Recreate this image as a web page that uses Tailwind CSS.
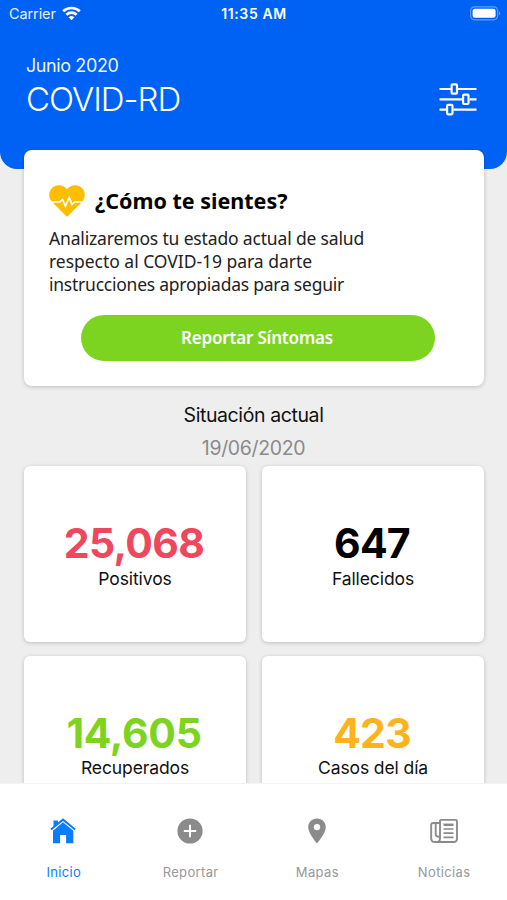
<!DOCTYPE html>
<html lang="es">
<head>
<meta charset="utf-8">
<meta name="viewport" content="width=device-width, initial-scale=1">
<title>COVID-RD</title>
<script src="https://cdn.jsdelivr.net/npm/@tailwindcss/browser@4"></script>
</head>
<body class="bg-[#eeeeee]">
<div class="flex h-[900px] w-[507px] flex-col overflow-hidden bg-[#eeeeee] font-['Inter','Liberation_Sans',sans-serif] text-[#111]">
  <main class="flex min-h-0 flex-1 flex-col overflow-hidden">
    <header class="h-[169px] shrink-0 rounded-b-[17px] bg-[#0062f4] text-white">
      <div class="grid h-7 grid-cols-3 items-center pr-[6px] pl-[9px] leading-none">
        <div class="flex items-center gap-[6px]">
          <span class="text-[14.5px] tracking-[-0.1px] text-white/90">Carrier</span>
          <svg class="-mt-[2px] h-[15px] w-[19px]" viewBox="0 0 19 15" fill="none" stroke="white" stroke-width="2.7"><path d="M1.2 5.3C5.9.9 13.1.9 17.8 5.3M4.4 8.7c2.9-2.7 7.3-2.7 10.2 0"/><path d="M6.6 11.3q2.9-2.4 5.8 0L9.5 14.2z" fill="white" stroke="none"/></svg>
        </div>
        <span class="-ml-[2px] text-center text-[14px] font-semibold tracking-[0.6px] whitespace-nowrap">11:35 AM</span>
        <svg class="-mt-[2px] h-[15px] w-[31px] justify-self-end" viewBox="0 0 31 15"><rect x=".6" y=".8" width="27" height="13" rx="4" fill="none" stroke="white" stroke-opacity=".38" stroke-width="1.2"/><rect x="2.6" y="2.8" width="23" height="9" rx="2.2" fill="white"/><path d="M29 5q2.3 2.3 0 4.6z" fill="white" fill-opacity=".4"/></svg>
      </div>
      <div class="flex items-start justify-between pt-[27px] pr-[30px] pl-[26px]">
        <div>
          <p class="text-[18px] leading-[22px] tracking-[-0.4px] text-white/95">Junio 2020</p>
          <h1 class="mt-[2px] text-[33px] leading-[40px] font-light tracking-[-1px]">COVID-RD</h1>
        </div>
        <svg class="mt-[27px] h-[34px] w-[38px]" viewBox="0 0 38 34" fill="none" stroke="white" stroke-width="2.2"><path d="M.5 7H12M19 7h18.500M.5 17.300H23.500M30.500 17.300h7M.5 27.600H7.500M14.500 27.600h23"/><rect x="12.600" y="2.300" width="5.400" height="9.400" rx="1"/><rect x="24.100" y="12.600" width="5.400" height="9.400" rx="1"/><rect x="8.100" y="22.900" width="5.400" height="9.400" rx="1"/></svg>
      </div>
    </header>

    <section class="z-10 mx-6 -mt-[19px] mr-[23px] h-[236px] shrink-0 rounded-[8px] bg-white px-[26px] pt-[34px] font-['Noto_Sans',sans-serif] shadow-[0_1px_4px_rgba(0,0,0,0.2)]">
      <div class="-ml-px flex h-[33px] items-center gap-[10px]">
        <svg class="h-[32px] w-[36px]" viewBox="0 0 36 32"><path d="M18 4.200C13.500-1.400 5.500-.6 2 4.200-.6 8-.3 12.700 2.600 16.400L16.800 30.800Q18 32 19.200 30.800L33.400 16.400C36.300 12.700 36.600 8 34 4.200 30.500-.6 22.500-1.400 18 4.200Z" fill="#ffbd00"/><path d="M0 17H10.800L13.600 14.600 16.400 21.200 20.200 12.400 23 19.600 25.500 17H36" fill="none" stroke="white" stroke-width="1.700"/></svg>
        <h2 class="mt-[2px] text-[21.500px] font-bold tracking-[0px] text-black">¿Cómo te sientes?</h2>
      </div>
      <p class="mt-[10px] -ml-px text-[17.500px] leading-[23px] whitespace-nowrap text-[#222]"><span class="tracking-[-0.16px]">Analizaremos tu estado actual de salud</span><br><span class="tracking-[-0.03px]">respecto al COVID-19 para darte</span><br><span class="tracking-[-0.24px]">instrucciones apropiadas para seguir</span></p>
      <button class="mx-auto mt-[19px] ml-[31px] block h-[46px] w-[354px] rounded-full bg-[#7cd420] pr-[2px] text-[17px] font-semibold tracking-[-0.18px] text-white">Reportar Síntomas</button>
    </section>

    <div class="shrink-0 pt-[16px] text-center">
      <h3 class="text-[19.500px] leading-[26px] tracking-[-0.4px]">Situación actual</h3>
      <p class="mt-[7px] text-[19.500px] leading-[26px] tracking-[-0.35px] text-[#8a8a8a]">19/06/2020</p>
    </div>

    <section class="mt-[5px] mr-[23px] ml-6 grid shrink-0 grid-cols-2 gap-x-4 gap-y-[14px] text-center">
      <article class="h-[176px] rounded-[6px] bg-white pt-[53px] shadow-[0_1px_4px_rgba(0,0,0,0.2)]">
        <p class="-ml-[2px] text-[41px] leading-[48px] font-bold tracking-[-0.7px] text-[#ef475d]">25,068</p>
        <p class="mt-px text-[17.500px] leading-[22px] tracking-[-0.1px]">Positivos</p>
      </article>
      <article class="h-[176px] rounded-[6px] bg-white pt-[53px] shadow-[0_1px_4px_rgba(0,0,0,0.2)]">
        <p class="-ml-[2px] text-[41px] leading-[48px] font-bold tracking-[-0.8px] text-black">647</p>
        <p class="mt-px text-[17.500px] leading-[22px] tracking-[-0.1px]">Fallecidos</p>
      </article>
      <article class="h-[176px] rounded-[6px] bg-white pt-[53px] shadow-[0_1px_4px_rgba(0,0,0,0.2)]">
        <p class="-ml-[2px] text-[41px] leading-[48px] font-bold tracking-[-0.3px] text-[#7cd420]">14,605</p>
        <p class="text-[17.500px] leading-[22px] tracking-[-0.1px]">Recuperados</p>
      </article>
      <article class="h-[176px] rounded-[6px] bg-white pt-[53px] shadow-[0_1px_4px_rgba(0,0,0,0.2)]">
        <p class="-ml-[2px] text-[41px] leading-[48px] font-bold tracking-[-0.8px] text-[#fdb31b]">423</p>
        <p class="text-[17.500px] leading-[22px] tracking-[-0.1px]">Casos del día</p>
      </article>
    </section>
  </main>

  <nav class="z-20 grid h-[117px] shrink-0 grid-cols-4 border-t border-[#f3f3f3] bg-white text-[13px] leading-4 tracking-[0.35px] text-[#989898]">
    <a class="flex flex-col items-center pt-[34px] text-[#0a7cff]">
      <svg class="h-[26px] w-[26px]" viewBox="0 0 26 26" fill="#0a7cff"><path d="M3.500 9.300V2.500H8V5.300L3.500 9.300ZM13 .3 25.700 10.800 24.500 12.200 13 2.900 1.500 12.200.3 10.800Z"/><path d="M13 4.300 23.300 12.800V25.300H16.100V17H10.100V25.300H3V12.800Z"/></svg>
      <span class="mt-[20px] pl-px">Inicio</span>
    </a>
    <a class="flex flex-col items-center pt-[34px]">
      <svg class="h-[26px] w-[26px]" viewBox="0 0 26 26"><circle cx="13" cy="13" r="12.600" fill="#8b8b8b"/><path d="M13 6.800V19.200M6.800 13H19.200" stroke="white" stroke-width="2"/></svg>
      <span class="mt-[20px] pl-px">Reportar</span>
    </a>
    <a class="flex flex-col items-center pt-[34px]">
      <svg class="h-[26px] w-[26px]" viewBox="0 0 26 26"><path fill="#8b8b8b" fill-rule="evenodd" d="M13 .4C8 .4 4.200 4.200 4.200 9.100 4.200 15.500 13 25.500 13 25.500S21.800 15.500 21.800 9.100C21.800 4.200 18 .4 13 .4ZM13 5.900a3.200 3.200 0 1 1 0 6.400 3.200 3.200 0 0 1 0-6.400Z"/></svg>
      <span class="mt-[20px] pl-px">Mapas</span>
    </a>
    <a class="flex flex-col items-center pt-[34px]">
      <svg class="h-[26px] w-[28px]" viewBox="0 0 28 26" fill="none" stroke="#8b8b8b" stroke-width="1.900"><path d="M11.500 1.900H25.500Q27 1.900 27 3.400V20.500Q27 24 23.500 24H4.800Q1.200 24 1.200 20.300V7Q1.200 5 3.200 5H10V3.400Q10 1.900 11.500 1.900ZM10 5V20.500Q10 24 6.400 24M5.700 5V16.500Q5.700 18.800 10 18.800"/><path d="M13.500 6.800H23.500" stroke-width="2.500"/><path d="M13.500 11H23.500M13.500 15.200H23.500M13.500 19.400H23.500" stroke-width="1.700"/></svg>
      <span class="mt-[20px] pl-px">Noticias</span>
    </a>
  </nav>
</div>
</body>
</html>
